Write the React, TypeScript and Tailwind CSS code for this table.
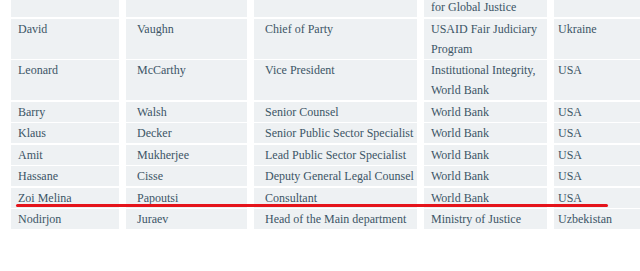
import React from "react";

type Row = { cells: string[][]; tall?: boolean };

const rows: Row[] = [
  { cells: [[""], [""], [""], ["for Global Justice"], [""]] },
  {
    tall: true,
    cells: [["David"], ["Vaughn"], ["Chief of Party"], ["USAID Fair Judiciary", "Program"], ["Ukraine"]],
  },
  {
    tall: true,
    cells: [["Leonard"], ["McCarthy"], ["Vice President"], ["Institutional Integrity,", "World Bank"], ["USA"]],
  },
  { cells: [["Barry"], ["Walsh"], ["Senior Counsel"], ["World Bank"], ["USA"]] },
  { cells: [["Klaus"], ["Decker"], ["Senior Public Sector Specialist"], ["World Bank"], ["USA"]] },
  { cells: [["Amit"], ["Mukherjee"], ["Lead Public Sector Specialist"], ["World Bank"], ["USA"]] },
  { cells: [["Hassane"], ["Cisse"], ["Deputy General Legal Counsel"], ["World Bank"], ["USA"]] },
  { cells: [["Zoi Melina"], ["Papoutsi"], ["Consultant"], ["World Bank"], ["USA"]] },
  { cells: [["Nodirjon"], ["Juraev"], ["Head of the Main department"], ["Ministry of Justice"], ["Uzbekistan"]] },
];

const padClasses = ["pl-[7px]", "pl-[11px]", "pl-[11px]", "pl-[7px]", "pl-[4px]"];

export default function App() {
  return (
    <div
      className="relative w-[640px] h-[271px] overflow-hidden bg-white text-[12px] leading-[20px] text-[#3c5566]"
      style={{ fontFamily: '"Liberation Serif", "Times New Roman", serif' }}
    >
      <div className="mt-[-3px] flex flex-col gap-y-[1.5px]">
        {rows.map((r, i) => (
          <div
            key={i}
            className="grid grid-cols-[108px_121px_163px_123px_86px] gap-x-[7px] pl-[11px]"
          >
            {r.cells.map((lines, j) => (
              <div
                key={j}
                className={`bg-[#eef1f3] whitespace-nowrap ${padClasses[j]} ${r.tall ? "h-[40px]" : "h-[20px]"}`}
              >
                {lines.map((l, k) => (
                  <div key={k}>{l || "\u00a0"}</div>
                ))}
              </div>
            ))}
          </div>
        ))}
      </div>
      <div className="absolute left-[16px] top-[204px] w-[592px] h-[3px] rounded-full bg-[#e5141b]" />
    </div>
  );
}
